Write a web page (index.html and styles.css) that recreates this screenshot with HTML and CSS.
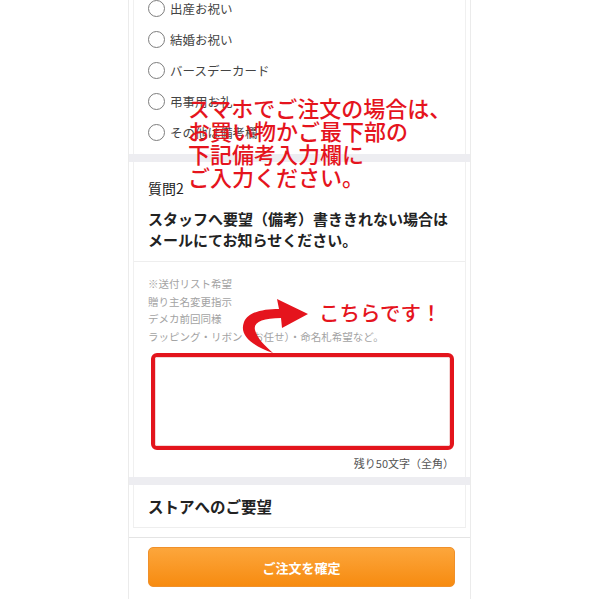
FILE: index.html
```html
<!DOCTYPE html>
<html lang="ja">
<head>
    <meta charset="UTF-8">
    <meta name="viewport" content="width=device-width, initial-scale=1.0">
    <title>ご注文手続き</title>
    <link rel="stylesheet" href="styles.css">
</head>
<body>
    <div class="page">
        <!-- 質問1 選択肢 -->
        <section class="card">
            <ul class="choices">
                <li><span class="radio"></span>出産お祝い</li>
                <li><span class="radio"></span>結婚お祝い</li>
                <li><span class="radio"></span>バースデーカード</li>
                <li><span class="radio"></span>弔事用お礼</li>
                <li><span class="radio"></span>その他は備考欄</li>
            </ul>
        </section>
        <div class="band"></div>

        <!-- 質問2 -->
        <section class="card">
            <div class="q-head">
                <p class="q-num">質問2</p>
                <h2 class="q-title">スタッフへ要望（備考）書ききれない場合は<br>メールにてお知らせください。</h2>
            </div>
            <div class="q-body">
                <p class="hint">※送付リスト希望<br>贈り主名変更指示<br>デメカ前回同様<br>ラッピング・リボン（お任せ）・命名札希望など。</p>
                <div class="memo"><textarea></textarea></div>
                <p class="count">残り50文字（全角）</p>
            </div>
        </section>
        <div class="band"></div>

        <!-- ストアへのご要望 -->
        <section class="card store">
            <h2>ストアへのご要望</h2>
        </section>
        <div class="order">
            <button class="confirm">ご注文を確定</button>
        </div>

        <!-- 注釈 -->
        <p class="note">スマホでご注文の場合は、<br>お買い物かご最下部の<br>下記備考入力欄に<br>ご入力ください。</p>
        <p class="here">こちらです！</p>
        <svg class="arrow" width="80" height="62" viewBox="0 0 80 62">
            <path d="M42 58 C20 50, 8 40, 13 27 C17 17, 32 14, 48 14 L46 4 L77 19 L51 33 L50 23 C32 23, 22 27, 24 35 C26 43, 34 51, 42 58 Z" fill="#e5141d"/>
        </svg>
    </div>
</body>
</html>
```

FILE: styles.css
```css
* {
    margin: 0;
    padding: 0;
    box-sizing: border-box;
}
body {
    background: #fff;
    font-family: "Noto Sans CJK JP", "Noto Sans", sans-serif;
    color: #333;
}
.page {
    position: relative;
    display: flex;
    flex-direction: column;
    width: 343px;
    height: 599px;
    margin: 0 auto;
    border-left: 1px solid #ebebeb;
    border-right: 1px solid #ebebeb;
    overflow: hidden;
}
/* Cards */
.card {
    margin: 0 4px;
    padding: 0 14px;
    background: #fff;
    border-left: 1px solid #f0f0f0;
    border-right: 1px solid #f0f0f0;
}
.band {
    height: 8px;
    background: #ededf1;
    flex-shrink: 0;
}
/* Radio list */
.choices {
    list-style: none;
    margin-top: -7px;
    padding-bottom: 6px;
}
.choices li {
    display: flex;
    align-items: center;
    gap: 5px;
    height: 31px;
    font-size: 12.5px;
    color: #444;
}
.radio {
    width: 17px;
    height: 17px;
    border: 1.5px solid #7d7d7d;
    border-radius: 50%;
    flex-shrink: 0;
}
/* Question 2 */
.q-head {
    padding: 16px 0 11px;
    border-bottom: 1px solid #eee;
    margin: 0 -14px;
    padding-left: 14px;
}
.q-num {
    font-size: 14px;
    line-height: 20px;
    color: #222;
}
.q-title {
    margin-top: 10px;
    font-size: 15px;
    line-height: 21px;
    font-weight: bold;
    color: #222;
}
.q-body {
    padding: 13px 0 6px;
}
.hint {
    font-size: 10.5px;
    line-height: 17.5px;
    color: #a3a3a3;
}
.memo {
    height: 97px;
    margin: 8px -3px 0 3px;
    border: 4px solid #e3141c;
    border-radius: 6px;
    background: #fff;
}
.memo textarea {
    display: block;
    width: 100%;
    height: 100%;
    border: 1px solid #f4d6d6;
    border-radius: 2px;
    resize: none;
    background: #fff;
}
.count {
    margin: 5px -3px 0 0;
    font-size: 11px;
    line-height: 16px;
    text-align: right;
    color: #555;
}
/* Store request */
.store {
    height: 43px;
    display: flex;
    align-items: center;
    border-bottom: 1px solid #eee;
}
.store h2 {
    font-size: 15.5px;
    font-weight: bold;
    color: #222;
}
/* Order button */
.order {
    margin-top: 9px;
    border-top: 1px solid #e4e4e4;
    padding: 9px 15px 0 19px;
}
.confirm {
    display: block;
    width: 100%;
    height: 40px;
    border: 1px solid #f0902a;
    border-radius: 5px;
    background: linear-gradient(#fca63c, #f78b10);
    color: #fff;
    font-family: inherit;
    font-size: 13px;
    font-weight: bold;
}
/* Annotations */
.note {
    position: absolute;
    left: 59px;
    top: 96px;
    font-size: 22px;
    line-height: 23px;
    font-weight: 500;
    color: #e5141d;
    white-space: nowrap;
}
.here {
    position: absolute;
    left: 190px;
    top: 300px;
    font-size: 20.5px;
    line-height: 24px;
    font-weight: 500;
    color: #e5141d;
    white-space: nowrap;
}
.arrow {
    position: absolute;
    left: 102px;
    top: 295px;
}
```
